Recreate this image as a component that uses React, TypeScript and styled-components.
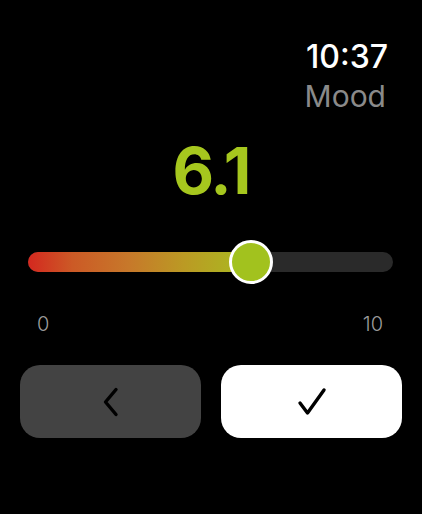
import React from "react"
import styled, { createGlobalStyle } from "styled-components"

const GlobalStyle = createGlobalStyle`
  html, body {
    margin: 0;
    padding: 0;
    background: #000;
  }
  body {
    font-family: "Inter", "Liberation Sans", sans-serif;
    color: #fff;
  }
`

const value = 6.1
const max = 10

export default function App() {
  const pct = (value / max) * 100
  return (
    <>
      <GlobalStyle />
      <Screen>
        <Header>
          <Time>10:37</Time>
          <Title>Mood</Title>
        </Header>
        <Value>{value.toFixed(1)}</Value>
        <SliderArea>
          <Track>
            <Fill style={{ width: `${pct}%` }} />
            <Thumb style={{ left: `${pct}%` }} />
          </Track>
        </SliderArea>
        <Scale>
          <span>0</span>
          <span>10</span>
        </Scale>
        <Buttons>
          <Button $variant="secondary" aria-label="Back">
            <svg width="18" height="30" viewBox="0 0 18 30" fill="none">
              <path
                d="M14 2.5 L3.5 15 L14 27.5"
                stroke="#000"
                strokeWidth="3.4"
                strokeLinecap="round"
                strokeLinejoin="round"
              />
            </svg>
          </Button>
          <Button $variant="primary" aria-label="Done">
            <svg width="30" height="30" viewBox="0 0 30 30" fill="none">
              <path
                d="M3 16 L10.5 26 L27 3"
                stroke="#000"
                strokeWidth="3.4"
                strokeLinecap="round"
                strokeLinejoin="round"
              />
            </svg>
          </Button>
        </Buttons>
      </Screen>
    </>
  )
}

const Screen = styled.div`
  width: 422px;
  height: 514px;
  display: flex;
  flex-direction: column;
  box-sizing: border-box;
  padding-top: 41px;
`

const Header = styled.header`
  display: flex;
  flex-direction: column;
  align-items: flex-end;
  padding-right: 36px;
  gap: 8px;
`

const Time = styled.div`
  font-size: 32px;
  line-height: 32px;
  font-weight: 500;
  color: #fff;
  margin-right: -2px;
`

const Title = styled.div`
  font-size: 30px;
  line-height: 30px;
  font-weight: 400;
  color: #8a8a8a;
`

const Value = styled.div`
  margin-top: 28px;
  text-align: center;
  font-size: 64px;
  line-height: 64px;
  font-weight: 700;
  letter-spacing: -2px;
  color: #a6c71e;
`

const SliderArea = styled.div`
  margin-top: 37px;
  height: 44px;
  display: flex;
  align-items: center;
  padding: 0 29px 0 28px;
`

const Track = styled.div`
  position: relative;
  flex: 1;
  height: 20px;
  border-radius: 10px;
  background: #2a2a2a;
`

const Fill = styled.div`
  height: 100%;
  border-radius: 10px 0 0 10px;
  background: linear-gradient(
    to right,
    #d4281f 0%,
    #cc5a26 20%,
    #c7782a 45%,
    #bb9a24 70%,
    #a8bc20 100%
  );
`

const Thumb = styled.div`
  position: absolute;
  top: 50%;
  width: 38px;
  height: 38px;
  border: 3px solid #fff;
  border-radius: 50%;
  background: #a2c21e;
  transform: translate(-50%, -50%);
`

const Scale = styled.div`
  margin-top: 30px;
  display: flex;
  justify-content: space-between;
  padding: 0 39px 0 37px;
  font-size: 20px;
  line-height: 20px;
  font-weight: 300;
  color: #9c9c9c;
`

const Buttons = styled.div`
  margin-top: 31px;
  display: grid;
  grid-template-columns: 1fr 1fr;
  gap: 20px;
  padding: 0 20px;
`

const Button = styled.button<{ $variant: "primary" | "secondary" }>`
  height: 73px;
  border: none;
  border-radius: 20px;
  display: flex;
  align-items: center;
  justify-content: center;
  padding: 0;
  background: ${(p) => (p.$variant === "primary" ? "#fff" : "#434343")};
  cursor: pointer;
`
